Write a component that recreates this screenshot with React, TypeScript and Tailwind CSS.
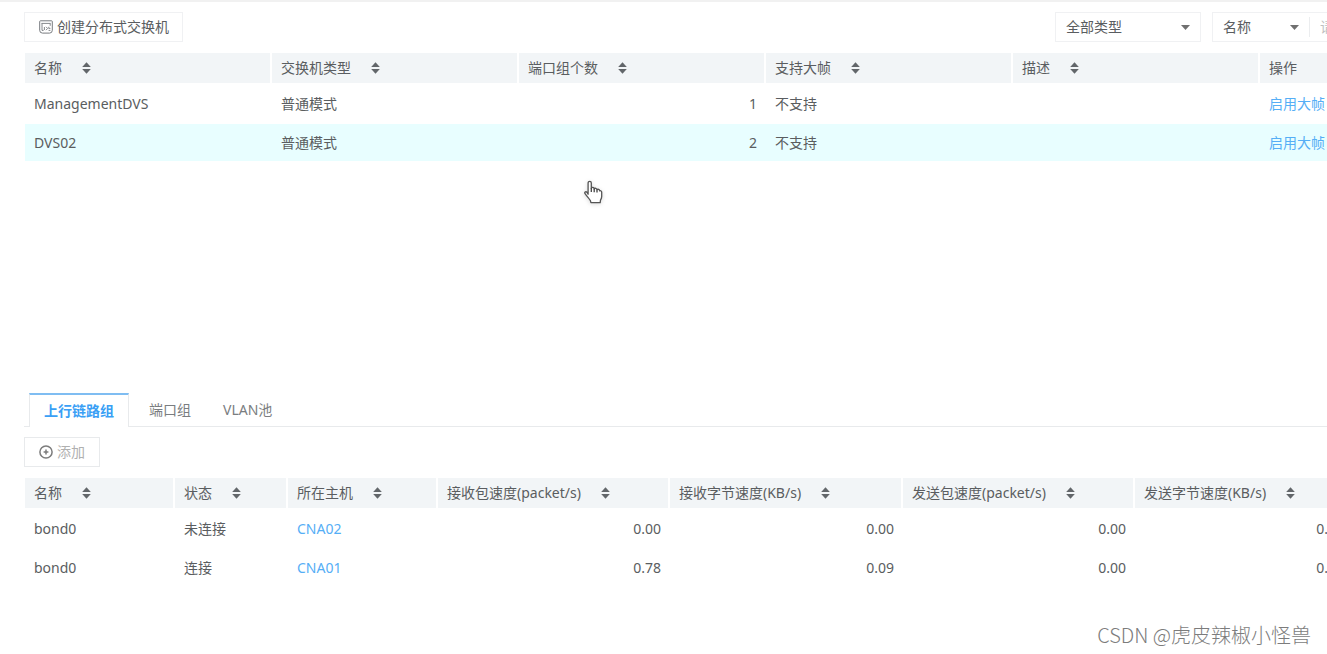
import React, { useState } from 'react';

interface Column {
    key: string;
    title: string;
    width: string;
    numeric?: boolean;
    link?: boolean;
    sortable?: boolean;
}

type Row = Record<string, string>;

const switchColumns: Column[] = [
    { key: 'name', title: '名称', width: 'w-[247px]', sortable: true },
    { key: 'type', title: '交换机类型', width: 'w-[247px]', sortable: true },
    { key: 'groups', title: '端口组个数', width: 'w-[247px]', numeric: true, sortable: true },
    { key: 'jumbo', title: '支持大帧', width: 'w-[247px]', sortable: true },
    { key: 'desc', title: '描述', width: 'w-[247px]', sortable: true },
    { key: 'action', title: '操作', width: 'w-auto', link: true },
];

const switches: Row[] = [
    { name: 'ManagementDVS', type: '普通模式', groups: '1', jumbo: '不支持', desc: '', action: '启用大帧' },
    { name: 'DVS02', type: '普通模式', groups: '2', jumbo: '不支持', desc: '', action: '启用大帧' },
];

const uplinkColumns: Column[] = [
    { key: 'name', title: '名称', width: 'w-[150px]', sortable: true },
    { key: 'status', title: '状态', width: 'w-[113px]', sortable: true },
    { key: 'host', title: '所在主机', width: 'w-[150px]', link: true, sortable: true },
    { key: 'rxPacket', title: '接收包速度(packet/s)', width: 'w-[232px]', numeric: true, sortable: true },
    { key: 'rxByte', title: '接收字节速度(KB/s)', width: 'w-[233px]', numeric: true, sortable: true },
    { key: 'txPacket', title: '发送包速度(packet/s)', width: 'w-[232px]', numeric: true, sortable: true },
    { key: 'txByte', title: '发送字节速度(KB/s)', width: 'w-auto', numeric: true, sortable: true },
];

const uplinks: Row[] = [
    { name: 'bond0', status: '未连接', host: 'CNA02', rxPacket: '0.00', rxByte: '0.00', txPacket: '0.00', txByte: '0.00' },
    { name: 'bond0', status: '连接', host: 'CNA01', rxPacket: '0.78', rxByte: '0.09', txPacket: '0.00', txByte: '0.00' },
];

const tabs = ['上行链路组', '端口组', 'VLAN池'];

const SortIcon: React.FC = () => (
    <svg width="9" height="12" viewBox="0 0 9 12" fill="#62666a" aria-hidden="true">
        <path d="M4.5 0.3 8.8 4.9H0.2Z" />
        <path d="M4.5 11.7 0.2 7.1H8.8Z" />
    </svg>
);

const SwitchIcon: React.FC = () => (
    <svg width="14" height="14" viewBox="0 0 14 14" fill="none" stroke="#777b7f" aria-hidden="true">
        <path d="M1.4 0.8h11.2a0.7 0.7 0 0 1 0.7 0.7v8.8a2.8 2.8 0 0 1-2.8 2.8H3.5a2.8 2.8 0 0 1-2.8-2.8V1.500a0.7 0.7 0 0 1 0.7-0.7Z" />
        <path d="M2.5 3.400h9M3 3.400v7h1.600M11.200 3.400v2.400" strokeWidth="0.9" />
        <path d="M5.4 7v3M7 6.800 8.600 8.400 7 10.200M9.800 6.800v1.600h1.600M9.600 10.400h1.800" strokeWidth="0.9" />
    </svg>
);

const AddIcon: React.FC = () => (
    <svg width="14" height="14" viewBox="0 0 14 14" fill="none" stroke="#7c7c7c" strokeWidth="1.5" aria-hidden="true">
        <circle cx="7" cy="7" r="6.1" />
        <path d="M7 4.6v4.8M4.6 7h4.8" />
    </svg>
);

const Caret: React.FC<{ className: string }> = ({ className }) => (
    <svg className={`pointer-events-none absolute top-[13px] ${className}`} width="9" height="5" viewBox="0 0 9 5" fill="#707070" aria-hidden="true">
        <path d="M0 0H9L4.5 5Z" />
    </svg>
);

const HandCursor: React.FC = () => (
    <svg className="pointer-events-none absolute left-[583px] top-[178px] drop-shadow-sm" width="20" height="25" viewBox="0 0 20 25" aria-hidden="true">
        <path
            d="M5.1 14.2V3.1c0-2.3 3.2-2.3 3.2 0v5.2c.5-1.4 2.7-1.2 2.9.5.7-1 2.6-.6 2.8.8.9-.8 2.6-.2 2.7 1.3.9-.5 2 .1 2 1.4v4.2c0 1.5-.5 2.5-1.2 3.700l-.3 2.400H7.900l-.5-2C6 18.600 4 16.400 2.200 13.900 1 12.200 2.700 11 4 12.300Z"
            fill="#fff"
            stroke="#555"
            strokeWidth="1.3"
            strokeLinejoin="round"
        />
        <path d="M8.3 8v4M11.200 8.800v3.400M14 9.600v3" stroke="#444" strokeWidth="1.3" />
    </svg>
);

interface DataTableProps {
    label: string;
    columns: Column[];
    rows: Row[];
    selected?: number;
    className: string;
}

const DataTable: React.FC<DataTableProps> = ({ label, columns, rows, selected, className }) => (
    <table aria-label={label} className={`table-fixed border-separate border-spacing-0 ${className}`}>
        <thead>
            <tr>
                {columns.map((col) => (
                    <th
                        key={col.key}
                        className={`h-8 border-b-2 border-r-2 border-white bg-[#f2f5f7] pl-[9px] text-left font-normal whitespace-nowrap last:border-r-0 ${col.width}`}
                    >
                        {col.sortable ? (
                            <button className="flex items-center gap-5">
                                {col.title}
                                <SortIcon />
                            </button>
                        ) : (
                            col.title
                        )}
                    </th>
                ))}
            </tr>
        </thead>
        <tbody>
            {rows.map((row, i) => (
                <tr key={i} className={i === selected ? 'bg-[#e8feff]' : ''}>
                    {columns.map((col) => (
                        <td
                            key={col.key}
                            className={`h-[39px] border-b-2 border-white whitespace-nowrap pl-[9px] ${col.numeric ? 'pr-[9px] text-right' : ''}`}
                        >
                            {col.link ? (
                                <a href="#" className="text-[#55aef6]">
                                    {row[col.key]}
                                </a>
                            ) : (
                                row[col.key]
                            )}
                        </td>
                    ))}
                </tr>
            ))}
        </tbody>
    </table>
);

export default function App() {
    const [activeTab, setActiveTab] = useState(0);

    return (
        <div className="relative min-h-screen overflow-hidden border-t-2 border-[#f1f1f1] bg-white font-['Noto_Sans','Noto_Sans_CJK_SC',sans-serif] text-sm text-[#5a5d60]">
            <main className="pl-6 pt-[10px]">
                <section className="min-h-[381px]">
                    <div className="mb-[11px] flex justify-between">
                        <button className="flex h-[30px] items-center gap-1 border border-[#f0f1f3] pl-[14px] pr-[13px]">
                            <SwitchIcon />
                            创建分布式交换机
                        </button>
                        <div className="flex gap-[11px]">
                            <div className="relative">
                                <select aria-label="类型" className="h-[30px] w-[146px] appearance-none border border-[#f0f1f3] bg-white pl-[10px]">
                                    <option>全部类型</option>
                                </select>
                                <Caret className="right-[11px]" />
                            </div>
                            <div className="flex h-[30px] w-[115px] items-center border-y border-l border-[#f0f1f3]">
                                <div className="relative -my-px shrink-0">
                                    <select aria-label="搜索字段" className="h-[30px] w-24 appearance-none bg-transparent pl-[10px]">
                                        <option>名称</option>
                                    </select>
                                    <Caret className="right-[10px]" />
                                </div>
                                <input
                                    aria-label="搜索"
                                    placeholder="请输入"
                                    className="h-5 min-w-0 flex-1 border-l border-[#ebedef] pl-[10px] placeholder:text-[#c0c0c0]"
                                />
                            </div>
                        </div>
                    </div>
                    <div className="pl-px">
                        <DataTable label="分布式交换机" columns={switchColumns} rows={switches} selected={1} className="w-full" />
                    </div>
                </section>

                <section>
                    <div role="tablist" className="flex h-[34px] border-b border-[#e8eaec] pl-[5px]">
                        {tabs.map((tab, i) => (
                            <button
                                key={tab}
                                role="tab"
                                aria-selected={i === activeTab}
                                onClick={() => setActiveTab(i)}
                                className={
                                    i === activeTab
                                        ? 'mr-1 h-[34px] border-x border-t-2 border-x-[#e8eaec] border-t-[#7fbdf2] bg-white px-[14px] font-bold text-[#3a9ff5]'
                                        : 'h-[34px] px-4 text-[#7a7d80]'
                                }
                            >
                                {tab}
                            </button>
                        ))}
                    </div>
                    <button className="mb-[11px] mt-[10px] flex h-[30px] items-center gap-1 border border-[#e8eaec] px-[14px] text-[#b0b0b0]">
                        <AddIcon />
                        添加
                    </button>
                    <div className="pl-px">
                        <DataTable label={tabs[0]} columns={uplinkColumns} rows={uplinks} className="w-[102%]" />
                    </div>
                </section>
            </main>

            <HandCursor />
            <p className="absolute bottom-[5px] right-4 font-['Noto_Sans_CJK_SC',sans-serif] text-xl font-light text-[#7c7c7c]">
                CSDN @虎皮辣椒小怪兽
            </p>
        </div>
    );
}
